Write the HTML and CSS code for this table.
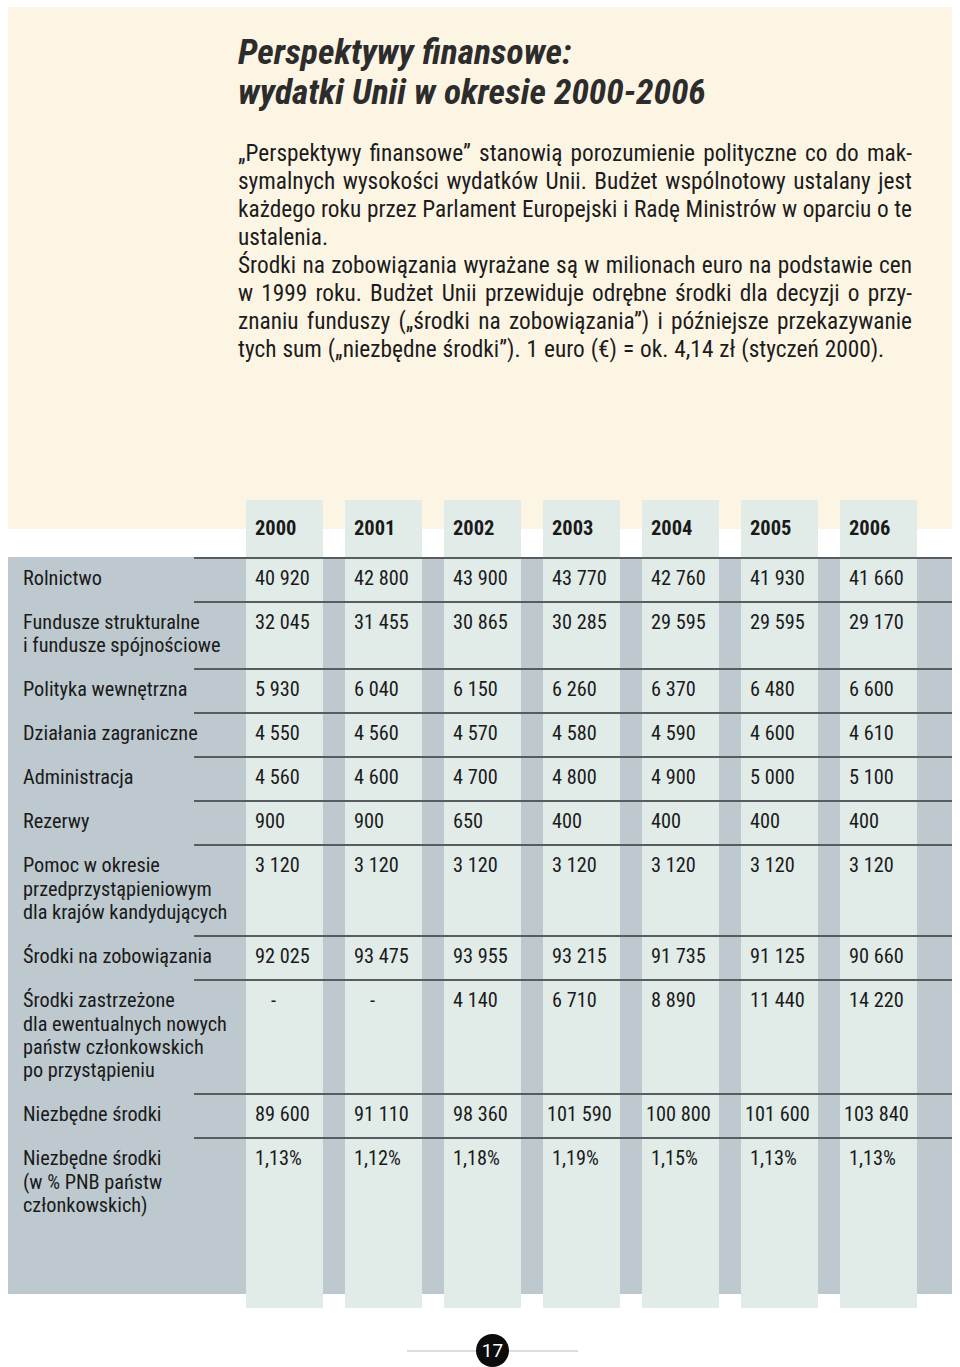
FILE: index.html
```html
<!DOCTYPE html>
<html lang="pl">
<head>
<meta charset="utf-8">
<title>Perspektywy finansowe</title>
<link rel="stylesheet" href="styles.css">
</head>
<body>
<div class="page">
  <section class="intro">
    <h1 class="title">Perspektywy finansowe:<br>wydatki Unii w okresie 2000-2006</h1>
    <p class="lead">
      <span class="ln">„Perspektywy finansowe” stanowią porozumienie polityczne co do mak-</span>
      <span class="ln">symalnych wysokości wydatków Unii. Budżet wspólnotowy ustalany jest</span>
      <span class="ln">każdego roku przez Parlament Europejski i Radę Ministrów w oparciu o te</span>
      <span class="ln last">ustalenia.</span>
      <span class="ln">Środki na zobowiązania wyrażane są w milionach euro na podstawie cen</span>
      <span class="ln">w 1999 roku. Budżet Unii przewiduje odrębne środki dla decyzji o przy-</span>
      <span class="ln">znaniu funduszy („środki na zobowiązania”) i późniejsze przekazywanie</span>
      <span class="ln last">tych sum („niezbędne środki”). 1 euro (€) = ok. 4,14 zł (styczeń 2000).</span>
    </p>
  </section>

  <div class="tbl">
    <div class="row head">
      <div class="lab"></div>
      <div class="c">2000</div><div class="c">2001</div><div class="c">2002</div><div class="c">2003</div><div class="c">2004</div><div class="c">2005</div><div class="c">2006</div>
    </div>
    <div class="row">
      <div class="lab">Rolnictwo</div>
      <div class="c">40 920</div><div class="c">42 800</div><div class="c">43 900</div><div class="c">43 770</div><div class="c">42 760</div><div class="c">41 930</div><div class="c">41 660</div>
    </div>
    <div class="row">
      <div class="lab">Fundusze strukturalne<br>i fundusze spójnościowe</div>
      <div class="c">32 045</div><div class="c">31 455</div><div class="c">30 865</div><div class="c">30 285</div><div class="c">29 595</div><div class="c">29 595</div><div class="c">29 170</div>
    </div>
    <div class="row">
      <div class="lab">Polityka wewnętrzna</div>
      <div class="c">5 930</div><div class="c">6 040</div><div class="c">6 150</div><div class="c">6 260</div><div class="c">6 370</div><div class="c">6 480</div><div class="c">6 600</div>
    </div>
    <div class="row">
      <div class="lab">Działania zagraniczne</div>
      <div class="c">4 550</div><div class="c">4 560</div><div class="c">4 570</div><div class="c">4 580</div><div class="c">4 590</div><div class="c">4 600</div><div class="c">4 610</div>
    </div>
    <div class="row">
      <div class="lab">Administracja</div>
      <div class="c">4 560</div><div class="c">4 600</div><div class="c">4 700</div><div class="c">4 800</div><div class="c">4 900</div><div class="c">5 000</div><div class="c">5 100</div>
    </div>
    <div class="row">
      <div class="lab">Rezerwy</div>
      <div class="c">900</div><div class="c">900</div><div class="c">650</div><div class="c">400</div><div class="c">400</div><div class="c">400</div><div class="c">400</div>
    </div>
    <div class="row">
      <div class="lab">Pomoc w okresie<br>przedprzystąpieniowym<br>dla krajów kandydujących</div>
      <div class="c">3 120</div><div class="c">3 120</div><div class="c">3 120</div><div class="c">3 120</div><div class="c">3 120</div><div class="c">3 120</div><div class="c">3 120</div>
    </div>
    <div class="row">
      <div class="lab">Środki na zobowiązania</div>
      <div class="c">92 025</div><div class="c">93 475</div><div class="c">93 955</div><div class="c">93 215</div><div class="c">91 735</div><div class="c">91 125</div><div class="c">90 660</div>
    </div>
    <div class="row">
      <div class="lab">Środki zastrzeżone<br>dla ewentualnych nowych<br>państw członkowskich<br>po przystąpieniu</div>
      <div class="c dash">-</div><div class="c dash">-</div><div class="c">4 140</div><div class="c">6 710</div><div class="c">8 890</div><div class="c">11 440</div><div class="c">14 220</div>
    </div>
    <div class="row">
      <div class="lab">Niezbędne środki</div>
      <div class="c">89 600</div><div class="c">91 110</div><div class="c">98 360</div><div class="c w">101 590</div><div class="c w">100 800</div><div class="c w">101 600</div><div class="c w">103 840</div>
    </div>
    <div class="row">
      <div class="lab">Niezbędne środki<br>(w % PNB państw<br>członkowskich)</div>
      <div class="c">1,13%</div><div class="c">1,12%</div><div class="c">1,18%</div><div class="c">1,19%</div><div class="c">1,15%</div><div class="c">1,13%</div><div class="c">1,13%</div>
    </div>
  </div>

  <footer class="folio">
    <div class="folio-rule"><span class="num">17</span></div>
  </footer>
</div>
</body>
</html>
```

FILE: styles.css
```css
html, body {
  margin: 0;
  padding: 0;
  background: #ffffff;
}

.page {
  width: 960px;
  padding-top: 7px;
  font-family: "Roboto", "Liberation Sans", Arial, sans-serif;
  font-stretch: 75%;
  color: #1a1a1a;
}

.intro {
  margin: 0 8px;
  height: 493px;
  box-sizing: border-box;
  padding: 25px 0 0 230px;
  background: #fdf5e4;
}

.title {
  margin: 0;
  font-size: 35.5px;
  line-height: 40px;
  font-weight: bold;
  font-style: italic;
  color: #2c2c2c;
}

.lead {
  margin: 27px 0 0;
  width: 674px;
  font-size: 23.3px;
  line-height: 28px;
  color: #1c1c1c;
}

.ln {
  display: block;
  text-align: justify;
  text-align-last: justify;
  white-space: nowrap;
}

.ln.last {
  text-align-last: left;
  word-spacing: 0.6px;
}

/* table */
.tbl {
  margin: 0 8px;
  padding-bottom: 80px;
  background-image:
    repeating-linear-gradient(to right, #e1ebe8 0 77px, transparent 77px 99px),
    linear-gradient(#bdc9cf, #bdc9cf),
    linear-gradient(#fdf5e4, #fdf5e4);
  background-position: 238px 0, 0 57px, 0 0;
  background-size: 693px 100%, 100% calc(100% - 71px), 100% 29px;
  background-repeat: no-repeat;
  font-size: 20.3px;
  line-height: 23.4px;
}

.row {
  display: grid;
  grid-template-columns: 238px repeat(7, 99px) 1fr;
  padding: 10px 0 10.6px;
  background-image: linear-gradient(#575c60, #575c60);
  background-position: right top;
  background-size: calc(100% - 186px) 2px;
  background-repeat: no-repeat;
  white-space: nowrap;
}

.row.head {
  height: 57px;
  box-sizing: border-box;
  padding: 17px 0 0;
  background-image: none;
  font-weight: bold;
  font-size: 20.5px;
  color: #1a1a1a;
}

.lab {
  padding-left: 15px;
}

.c {
  padding-left: 9px;
}

.c.w {
  padding-left: 4px;
}

.c.dash {
  padding-left: 25px;
}

/* page number */
.folio {
  display: flex;
  justify-content: center;
  padding-left: 25px;
  margin-top: 26px;
}

.folio-rule {
  width: 171px;
  height: 33px;
  display: flex;
  justify-content: center;
  align-items: center;
  background: linear-gradient(#dddddd, #dddddd) center / 100% 2px no-repeat;
}

.num {
  width: 33px;
  height: 33px;
  border-radius: 50%;
  background: #0c0c0c;
  color: #ffffff;
  font-size: 19px;
  font-stretch: 100%;
  line-height: 33px;
  text-align: center;
}
```
